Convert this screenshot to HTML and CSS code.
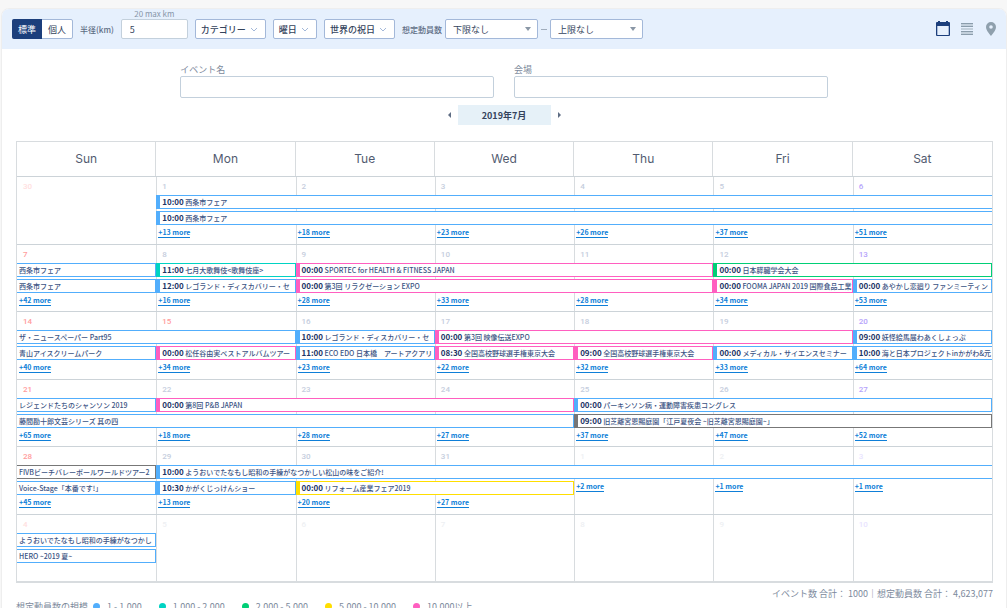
FILE: index.html
```html
<!DOCTYPE html>
<html lang="ja">
    <head>
        <meta charset="UTF-8" />
        <title>イベントカレンダー</title>
        <link rel="stylesheet" href="styles.css">
    </head>
    <body>
        <main class="panel">
            <div class="toolbar">
                <div class="btn-group">
                    <button type="button" class="active">標準</button>
                    <button type="button">個人</button>
                </div>
                <label class="bar-label" for="radius">半径(km)</label>
                <div class="radius">
                    <span class="hint">20 max km</span>
                    <input type="text" id="radius" value="5" />
                </div>
                <button type="button" class="drop">カテゴリー <svg viewBox="0 0 8 5"><path d="M1 1l3 3 3-3" /></svg></button>
                <button type="button" class="drop">曜日 <svg viewBox="0 0 8 5"><path d="M1 1l3 3 3-3" /></svg></button>
                <button type="button" class="drop">世界の祝日 <svg viewBox="0 0 8 5"><path d="M1 1l3 3 3-3" /></svg></button>
                <div class="range">
                    <label class="bar-label" for="min">想定動員数</label>
                    <div class="select"><select id="min"><option>下限なし</option></select></div>
                    <span class="dash"></span>
                    <div class="select"><select id="max" aria-label="上限"><option>上限なし</option></select></div>
                </div>
                <div class="views">
                    <button type="button" aria-label="カレンダー">
                        <svg width="14" height="16" viewBox="0 0 14 16"><path fill="#1c3f7c" d="M2 0h2v1h6V0h2v1h1q1 0 1 1v12q0 1-1 1H1q-1 0-1-1V2q0-1 1-1h1zM1.300 5v9h11.400V5z" /></svg>
                    </button>
                    <button type="button" aria-label="リスト">
                        <svg width="12" height="12" viewBox="0 0 12 12"><path fill="#c3d0dc" d="M0 0h12v12H0z" /><path stroke="#8b9dac" d="M0 .5h12M0 3.500h12M0 8.500h12M0 11.500h12" /><path stroke="#e6f0fd" d="M0 4.500h12M0 7.500h12" /></svg>
                    </button>
                    <button type="button" aria-label="地図">
                        <svg width="10" height="14" viewBox="0 0 10 14"><path fill="#8fa0ad" fill-rule="evenodd" d="M5 0a5 5 0 0 1 5 5c0 3.500-5 9-5 9S0 8.500 0 5a5 5 0 0 1 5-5zm0 3.200a1.800 1.800 0 1 0 0 3.600 1.800 1.800 0 0 0 0-3.600z" /></svg>
                    </button>
                </div>
            </div>

            <div class="search">
                <label>イベント名<input type="text" /></label>
                <label>会場<input type="text" /></label>
            </div>

            <div class="month-nav">
                <button type="button" class="arrow prev" aria-label="前の月"></button>
                <button type="button" class="current">2019年7月</button>
                <button type="button" class="arrow next" aria-label="次の月"></button>
            </div>

            <div class="calendar">
                <div class="weekdays">
                    <div>Sun</div><div>Mon</div><div>Tue</div><div>Wed</div><div>Thu</div><div>Fri</div><div>Sat</div>
                </div>
                <div class="weeks">
                    <div class="week">
                        <div class="days">
                            <div class="sun off">30</div><div>1</div><div>2</div><div>3</div><div>4</div><div>5</div><div class="sat">6</div>
                        </div>
                        <div class="events">
                            <div class="event blue start open col2 span6"><b>10:00</b> 西条市フェア</div>
                            <div class="event blue start open row2 col2 span6"><b>10:00</b> 西条市フェア</div>
                            <a href="#" class="more row3 col2">+13 more</a>
                            <a href="#" class="more row3 col3">+18 more</a>
                            <a href="#" class="more row3 col4">+23 more</a>
                            <a href="#" class="more row3 col5">+26 more</a>
                            <a href="#" class="more row3 col6">+37 more</a>
                            <a href="#" class="more row3 col7">+51 more</a>
                        </div>
                    </div>

                    <div class="week">
                        <div class="days">
                            <div class="sun">7</div><div>8</div><div>9</div><div>10</div><div>11</div><div>12</div><div class="sat">13</div>
                        </div>
                        <div class="events">
                            <div class="event blue col1">西条市フェア</div>
                            <div class="event teal start col2"><b>11:00</b> 七月大歌舞伎&lt;歌舞伎座&gt;</div>
                            <div class="event pink start col3 span3"><b>00:00</b> SPORTEC for HEALTH &amp; FITNESS JAPAN</div>
                            <div class="event green start col6 span2"><b>00:00</b> 日本膵臓学会大会</div>
                            <div class="event blue row2 col1">西条市フェア</div>
                            <div class="event blue start row2 col2"><b>12:00</b> レゴランド・ディスカバリー・セ</div>
                            <div class="event pink start row2 col3 span3"><b>00:00</b> 第3回 リラクゼーション EXPO</div>
                            <div class="event pink start row2 col6"><b>00:00</b> FOOMA JAPAN 2019 国際食品工業</div>
                            <div class="event blue start row2 col7"><b>00:00</b> あやかし恋廻り ファンミーティン</div>
                            <a href="#" class="more row3 col1">+42 more</a>
                            <a href="#" class="more row3 col2">+16 more</a>
                            <a href="#" class="more row3 col3">+28 more</a>
                            <a href="#" class="more row3 col4">+33 more</a>
                            <a href="#" class="more row3 col5">+28 more</a>
                            <a href="#" class="more row3 col6">+34 more</a>
                            <a href="#" class="more row3 col7">+53 more</a>
                        </div>
                    </div>

                    <div class="week">
                        <div class="days">
                            <div class="sun">14</div><div class="sun">15</div><div>16</div><div>17</div><div>18</div><div>19</div><div class="sat">20</div>
                        </div>
                        <div class="events">
                            <div class="event blue col1 span2">ザ・ニュースペーパー Part95</div>
                            <div class="event blue start col3"><b>10:00</b> レゴランド・ディスカバリー・セ</div>
                            <div class="event pink start col4 span3"><b>00:00</b> 第3回 映像伝送EXPO</div>
                            <div class="event blue start col7"><b>09:00</b> 妖怪絵馬展わあくしょっぷ</div>
                            <div class="event blue row2 col1">青山アイスクリームパーク</div>
                            <div class="event pink start row2 col2"><b>00:00</b> 松任谷由実ベストアルバムツアー</div>
                            <div class="event blue start row2 col3"><b>11:00</b> ECO EDO 日本橋　アートアクアリ</div>
                            <div class="event pink start row2 col4"><b>08:30</b> 全国高校野球選手権東京大会</div>
                            <div class="event pink start row2 col5"><b>09:00</b> 全国高校野球選手権東京大会</div>
                            <div class="event blue start row2 col6"><b>00:00</b> メディカル・サイエンスセミナー</div>
                            <div class="event blue start open row2 col7"><b>10:00</b> 海と日本プロジェクトinかがわ&amp;元</div>
                            <a href="#" class="more row3 col1">+40 more</a>
                            <a href="#" class="more row3 col2">+34 more</a>
                            <a href="#" class="more row3 col3">+23 more</a>
                            <a href="#" class="more row3 col4">+22 more</a>
                            <a href="#" class="more row3 col5">+32 more</a>
                            <a href="#" class="more row3 col6">+33 more</a>
                            <a href="#" class="more row3 col7">+64 more</a>
                        </div>
                    </div>

                    <div class="week">
                        <div class="days">
                            <div class="sun">21</div><div>22</div><div>23</div><div>24</div><div>25</div><div>26</div><div class="sat">27</div>
                        </div>
                        <div class="events">
                            <div class="event blue col1">レジェンドたちのシャンソン 2019</div>
                            <div class="event pink start col2 span3"><b>00:00</b> 第8回 P&amp;B JAPAN</div>
                            <div class="event blue start col5 span3"><b>00:00</b> パーキンソン病・運動障害疾患コングレス</div>
                            <div class="event blue row2 col1 span4">藤間勘十郎文芸シリーズ 其の四</div>
                            <div class="event gray start row2 col5 span3"><b>09:00</b> 旧芝離宮恩賜庭園「江戸夏夜会 ~旧芝離宮恩賜庭園~」</div>
                            <a href="#" class="more row3 col1">+65 more</a>
                            <a href="#" class="more row3 col2">+18 more</a>
                            <a href="#" class="more row3 col3">+28 more</a>
                            <a href="#" class="more row3 col4">+27 more</a>
                            <a href="#" class="more row3 col5">+37 more</a>
                            <a href="#" class="more row3 col6">+47 more</a>
                            <a href="#" class="more row3 col7">+52 more</a>
                        </div>
                    </div>

                    <div class="week">
                        <div class="days">
                            <div class="sun">28</div><div>29</div><div>30</div><div>31</div><div class="off">1</div><div class="off">2</div><div class="sat off">3</div>
                        </div>
                        <div class="events">
                            <div class="event gray col1">FIVBビーチバレーボールワールドツアー2</div>
                            <div class="event blue start open col2 span6"><b>10:00</b> ようおいでたなもし昭和の手練がなつかしい松山の味をご紹介!</div>
                            <div class="event blue row2 col1">Voice-Stage「本番です!」</div>
                            <div class="event blue start row2 col2"><b>10:30</b> かがくじっけんショー</div>
                            <div class="event yellow start row2 col3 span2"><b>00:00</b> リフォーム産業フェア2019</div>
                            <a href="#" class="more row2 col5">+2 more</a>
                            <a href="#" class="more row2 col6">+1 more</a>
                            <a href="#" class="more row2 col7">+1 more</a>
                            <a href="#" class="more row3 col1">+45 more</a>
                            <a href="#" class="more row3 col2">+13 more</a>
                            <a href="#" class="more row3 col3">+20 more</a>
                            <a href="#" class="more row3 col4">+27 more</a>
                        </div>
                    </div>

                    <div class="week">
                        <div class="days">
                            <div class="sun off">4</div><div class="off">5</div><div class="off">6</div><div class="off">7</div><div class="off">8</div><div class="off">9</div><div class="sat off">10</div>
                        </div>
                        <div class="events">
                            <div class="event blue col1">ようおいでたなもし昭和の手練がなつかし</div>
                            <div class="event blue row2 col1">HERO ~2019 夏~</div>
                        </div>
                    </div>
                </div>
            </div>

            <p class="total">イベント数 合計： 1000｜想定動員数 合計： 4,623,077</p>
            <div class="legend">
                <span class="legend-title">想定動員数の規模</span>
                <span class="key blue">1 - 1,000</span>
                <span class="key teal">1,000 - 2,000</span>
                <span class="key green">2,000 - 5,000</span>
                <span class="key yellow">5,000 - 10,000</span>
                <span class="key pink">10,000以上</span>
            </div>
        </main>
    </body>
</html>
```
FILE: styles.css
```css
* {
    box-sizing: border-box;
}
body {
    margin: 0;
    padding: 8px 0 0 1px;
    height: 100vh;
    overflow: hidden;
    background-color: #f7f7f7;
    color: #7d8a9c;
    font-family: "Noto Sans CJK JP", sans-serif;
    font-size: 9px;
}
button,
input,
select {
    font: inherit;
    color: #34435c;
}
button {
    padding: 0;
    border: 0;
    background: none;
}
.panel {
    border: 1px solid #eee;
    border-radius: 8px 8px 0 0;
    background-color: #fff;
    overflow: hidden;
}

/* 検索条件バー */
.toolbar {
    display: flex;
    align-items: center;
    gap: 7px;
    height: 40px;
    padding: 0 8px 0 10px;
    background-color: #e6f0fd;
}
.btn-group {
    display: flex;
    height: 20px;
    border: 1px solid #a3b8d9;
    border-radius: 2px;
    background-color: #fff;
}
.btn-group button {
    width: 30px;
}
.btn-group .active {
    margin: -1px 0 -1px -1px;
    border-radius: 2px 0 0 2px;
    background-color: #1c3f7c;
    color: #fff;
}
.bar-label {
    color: #5e6d84;
    font-size: 8px;
    font-weight: 500;
}
.radius {
    position: relative;
}
.radius input {
    display: block;
    width: 67px;
    height: 20px;
    padding: 0 8px;
    border: 1px solid #c3d0dc;
    border-radius: 2px;
}
.hint {
    position: absolute;
    top: -10px;
    left: 0;
    right: 0;
    color: #8896a8;
    font-size: 8px;
    line-height: 10px;
    text-align: center;
}
.drop {
    display: flex;
    align-items: center;
    gap: 4px;
    height: 20px;
    padding: 0 7px 0 5px;
    border: 1px solid #a3b8d9;
    border-radius: 2px;
    background-color: #fff;
    font-weight: 500;
}
.drop svg {
    width: 8px;
    height: 5px;
    fill: none;
    stroke: #a3b8d9;
}
.range {
    display: flex;
    align-items: center;
    gap: 3px;
}
.select {
    position: relative;
}
.select::after {
    content: "";
    position: absolute;
    top: 8px;
    right: 7px;
    border: 3px solid transparent;
    border-top: 4px solid #8a97a6;
    border-bottom: 0;
}
select {
    display: block;
    appearance: none;
    width: 93px;
    height: 20px;
    padding: 0 7px;
    border: 1px solid #a3b8d9;
    border-radius: 2px;
    background-color: #fff;
}
.dash {
    width: 6px;
    height: 1px;
    background-color: #a0adbd;
}
.views {
    display: flex;
    align-items: center;
    gap: 10px;
    margin-left: auto;
}
.views button {
    width: 14px;
}
.views svg {
    display: block;
    margin: 0 auto;
}

/* イベント名・会場 */
.search {
    display: grid;
    grid-template-columns: 1fr 1fr;
    gap: 20px;
    width: 64.5%;
    margin: 14px auto 0;
}
.search label {
    line-height: 13px;
}
.search input {
    display: block;
    width: 100%;
    height: 22px;
    border: 1px solid #c3d0dc;
    border-radius: 2px;
}
.month-nav {
    display: flex;
    justify-content: center;
    align-items: center;
    gap: 7px;
    margin-top: 7px;
}
.current {
    width: 93px;
    height: 20px;
    background-color: #e6f1f8;
    font-weight: bold;
}
.arrow {
    border: 3px solid transparent;
}
.prev {
    border-left: 0;
    border-right-color: #5e6d84;
}
.next {
    border-right: 0;
    border-left-color: #5e6d84;
}

/* カレンダー */
.calendar {
    margin: 16px 13px 0 14px;
    border: 1px solid #d8dcdf;
    border-bottom-width: 2px;
}
.weekdays,
.days,
.events {
    display: grid;
    grid-template-columns: repeat(7, minmax(0, 1fr));
}
.weekdays div {
    border-right: 1px solid #d8dcdf;
    color: #525b70;
    font-family: Inter, sans-serif;
    font-size: 12px;
    line-height: 34px;
    text-align: center;
}
.weekdays div:last-child {
    border-right: 0;
}
.weeks {
    display: grid;
    grid-auto-rows: 1fr;
    min-height: 405px;
}
.week {
    display: grid;
    border-top: 1px solid #ccd3d8;
}
.days,
.events {
    grid-area: 1 / 1;
}
.days div {
    padding: 4px 5px;
    border-left: 1px solid #d8dcdf;
    color: #c5cddd;
    font-family: Roboto, sans-serif;
    font-size: 8px;
    font-weight: 500;
    line-height: 11px;
}
.days div:first-child {
    border-left: 0;
    padding-left: 6px;
}
.days .sun {
    color: #ff9c9c;
}
.days .sat {
    color: #b5a2fb;
}
.days .off {
    color: #eef0f3;
}
.days .sun.off {
    color: #ffe0e0;
}
.days .sat.off {
    color: #e9e4ff;
}
.events {
    grid-template-rows: repeat(3, 14px);
    row-gap: 2px;
    padding-top: 18px;
}
.event {
    grid-row: 1;
    height: 14px;
    padding-left: 2px;
    border: 1px solid;
    border-left: 0;
    background-color: #fff;
    font-size: 7px;
    font-weight: 500;
    line-height: 12px;
    white-space: nowrap;
    overflow: hidden;
    -webkit-text-fill-color: #3c5484;
}
.event b {
    font-size: 8px;
    line-height: 11px;
    -webkit-text-fill-color: #1c3566;
}
.start {
    border-left: 4px solid;
}
.open {
    border-right: 0;
}
.more {
    justify-self: start;
    height: 10px;
    margin: 1px 0 0 2px;
    border-bottom: 1px solid;
    color: #0f7fd8;
    font-size: 7px;
    font-weight: bold;
    line-height: 8px;
    text-decoration: none;
}
.blue { color: #52aefc; }
.teal { color: #00d3c3; }
.green { color: #00cf76; }
.pink { color: #ff5fc0; }
.yellow { color: #ffde00; }
.gray { color: #777; }

.col1 { grid-column-start: 1; }
.col2 { grid-column-start: 2; }
.col3 { grid-column-start: 3; }
.col4 { grid-column-start: 4; }
.col5 { grid-column-start: 5; }
.col6 { grid-column-start: 6; }
.col7 { grid-column-start: 7; }
.span2 { grid-column-end: span 2; }
.span3 { grid-column-end: span 3; }
.span4 { grid-column-end: span 4; }
.span6 { grid-column-end: span 6; }
.row2 { grid-row: 2; }
.row3 { grid-row: 3; }

/* 合計と凡例 */
.total {
    margin: 4px 13px 0;
    line-height: 13px;
    text-align: right;
}
.legend {
    display: flex;
    gap: 17px;
    margin: 0 14px;
    line-height: 13px;
}
.legend-title {
    margin-right: -12px;
}
.key {
    display: flex;
    align-items: center;
    gap: 7px;
    -webkit-text-fill-color: #7d8a9c;
}
.key::before {
    content: "";
    width: 7px;
    height: 7px;
    border-radius: 50%;
    background-color: currentColor;
}
```
